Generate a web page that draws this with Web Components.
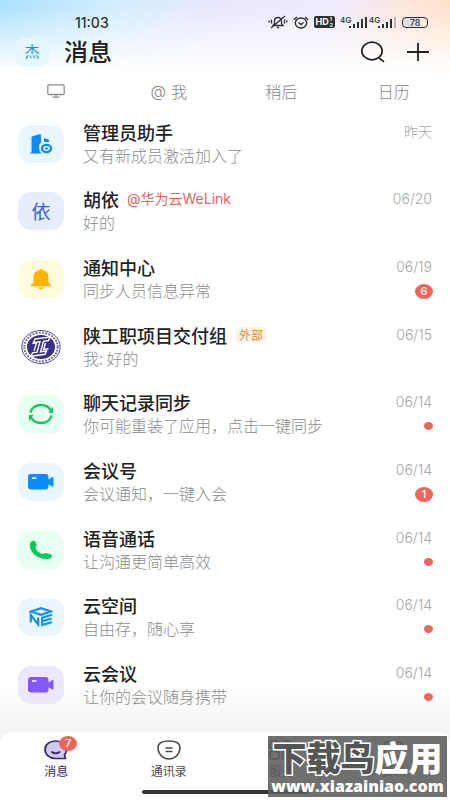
<!DOCTYPE html>
<html lang="zh-CN">
<head>
<meta charset="utf-8">
<meta name="viewport" content="width=device-width, initial-scale=1">
<title>消息</title>
<style>
    body {
        margin: 0;
        background: #fff;
        color: #222;
        font-family: "Noto Sans CJK SC", sans-serif;
    }
</style>
</head>
<body>
<message-app></message-app>

<script>
const ICONS = {
    admin: `<svg width="24" height="20" viewBox="0 0 24 20"><path fill="#0a8cff" d="M1 18.500h1.500V3.500q0-1 1-1.300L10.500.300q1.500-.300 1.500 1V8q-2 2-2 6 0 3 2.500 5.500H1zM15 4l4 1.200q1 .3 1 1.300v1.500h-5z"/><ellipse cx="17.500" cy="14.500" rx="4.500" ry="3.600" fill="none" stroke="#0a8cff" stroke-width="2.400"/><ellipse cx="17.500" cy="14.500" rx="1.500" ry="1.200" fill="#0a8cff"/></svg>`,
    bell: `<svg width="22" height="22" viewBox="0 0 22 22"><path fill="#ffb400" d="M9.500 2a1.600 1.500 0 0 1 3 0c4 .8 6 3.500 6 7v5.500l2.300 2.200c.6.700.2 1.500-.6 1.500H1.800c-.8 0-1.200-.8-.6-1.500l2.300-2.200V9c0-3.500 2-6.200 6-7zM8 19.300h6c-.3 1.300-1.500 2-3 2s-2.700-.7-3-2z"/></svg>`,
    sync: `<svg width="26" height="22" viewBox="0 0 26 22" fill="none" stroke="#14c45f" stroke-width="2.300"><path d="M2.500 9.500C3.500 4.800 7.800 2 13 2c4.500 0 8 2 9.800 5.500M23.500 12.500C22.500 17.200 18.200 20 13 20c-4.500 0-8-2-9.800-5.500"/><path fill="#14c45f" stroke="none" d="M25 3.500v6.500h-4.500zM1 18.500V12h4.500z"/></svg>`,
    video: `<svg width="26" height="18" viewBox="0 0 26 18"><rect y="1" width="20.500" height="15.500" rx="3" fill="currentColor"/><path fill="currentColor" d="M19 7.500 24.500 4q1-.4 1 .6V13q0 1-1 .6L19 10.500z"/><path stroke="#fff" stroke-width="1.500" d="M4 5h4.500"/></svg>`,
    phone: `<svg width="24" height="20" viewBox="0 0 24 20"><path fill="#0bc95b" d="M1 3.500C1.800 1.500 4 .3 5.200.8c1.300.6 2.300 3 2.500 4.500.1 1.200-1.500 1.800-1.200 2.800.8 2.300 3.500 4.800 6.500 5.800 1.200.3 2-.9 3.300-.9 2 .1 5.500 1.200 6.500 2.200.9 1-.6 3-3 3.600-4.500 1-10.500-.8-14.500-4.300C2 11.300.1 6.500 1 3.500z"/></svg>`,
    cube: `<svg width="24" height="20" viewBox="0 0 24 20" fill="none" stroke="#1592f0" stroke-width="2.200"><path d="M2 4.500 12 1.200l10 3.300L12 7.800zM1.800 15.500V8l7.400 9.500V10.500M23 7.800l-9.800 2.900v7.300l9.800-2.900M13.200 14.300l9.300-2.700"/></svg>`,
    college: `<svg width="42" height="36" viewBox="0 0 42 36"><g transform="translate(21 18) scale(1 .86)"><circle r="19.200" fill="#fff" stroke="#443b87" stroke-width="1"/><circle r="16.700" fill="none" stroke="#6d669f" stroke-width="2" stroke-dasharray="2 1.300"/><circle r="14" fill="#392f86"/></g><g fill="none" stroke="#fff" stroke-width="1.400"><path d="m15 10 15-2-1.500 3.500-5 .8-3 10.500 6-1-1.500 3.500-14 2 1.500-3.500 4.500-.7 3-10.500-6.500 1z"/><path d="m12.500 14.500 4-.6-2.500 8M25.500 14l-2 6.500 5-.8"/></g></svg>`,
    screen: `<svg width="18" height="14" viewBox="0 0 18 14" fill="none" stroke="#8b8b8b" stroke-width="1.300"><rect x=".8" y=".8" width="16.400" height="9.700" rx="1.200"/><path d="M9 10.500V13M5.500 13.200h7"/></svg>`,
    search: `<svg width="26" height="22" viewBox="0 0 26 22" fill="none" stroke="#222" stroke-width="1.700"><ellipse cx="12" cy="10" rx="10.200" ry="8.800"/><path d="m18.500 16.500 5.500 4.300"/></svg>`,
    plus: `<svg width="24" height="20" viewBox="0 0 24 20" stroke="#222" stroke-width="1.800"><path d="M1 10h22M12 1v18"/></svg>`,
    chat: `<svg width="26" height="22" viewBox="0 0 26 22" stroke="#33266e" stroke-width="1.700" stroke-linecap="round" stroke-linejoin="round"><path fill="#cfcbe6" d="M12.500 2C6.500 2 2 5.500 2 10.500s4.500 9 10.500 9h10l-1-3.500c1.300-1.500 2-3.300 2-5.500 0-5-5-8.500-11-8.500z"/><path fill="none" d="M9 13c2 1.800 5.500 1.800 7.500 0"/></svg>`,
    contacts: `<svg width="26" height="22" viewBox="0 0 26 22" fill="none" stroke="#4a4a4a" stroke-width="1.600"><path d="M13 2C7 2 2 3.800 2 8.500c0 3.500 2 7.500 5 9.700 3.300 2.400 8.700 2.400 12 0 3-2.200 5-6.200 5-9.700C24 3.800 19 2 13 2z"/><path d="M9.500 9h7M9.500 12.500h7"/></svg>`,
    apps: `<svg width="24" height="20" viewBox="0 0 24 20" fill="none" stroke="#4a4a4a" stroke-width="1.600"><rect x="1" y="1" width="9" height="7.500" rx="2"/><ellipse cx="18" cy="4.800" rx="4.700" ry="3.900"/><rect x="1" y="11.500" width="9" height="7.500" rx="2"/><rect x="13.500" y="11.500" width="9" height="7.500" rx="2"/></svg>`,
    news: `<svg width="20" height="18" viewBox="0 0 20 18" fill="none" stroke="#4a4a4a" stroke-width="1.600"><rect x="1" y="1" width="17" height="15.500" rx="2.500"/><path d="M13 1v8M7 9h11"/></svg>`
};

class StatusBar extends HTMLElement {
    constructor() {
        super();
        this.attachShadow({mode: 'open'});
    }

    connectedCallback() {
        this.shadowRoot.innerHTML = `
            <style>
        :host {
            display: flex;
            align-items: center;
            justify-content: space-between;
            height: 20px;
            padding: 12px 22px 0 75px;
            color: #2b2f36;
            font-family: Inter, "Liberation Sans", sans-serif;
        }

        time {
            font-size: 14px;
            font-weight: 500;
        }

        .right {
            display: flex;
            align-items: center;
            gap: 5px;
        }

        svg {
            display: block;
        }

        .hd {
            display: flex;
            gap: 1px;
            padding: 0 2px;
            border-radius: 2px;
            background: #2b2f36;
            color: #fff;
            font-size: 9px;
            font-weight: 700;
            line-height: 12px;
        }

        .sim {
            font-size: 5px;
            line-height: 6px;
        }

        .signals {
            display: flex;
            gap: 1px;
        }

        .signal {
            display: grid;
            grid-template-columns: 8px 20px;
            align-items: start;
            font-size: 8px;
            font-weight: 500;
            line-height: 8px;
        }

        .battery {
            box-sizing: border-box;
            width: 26px;
            height: 11px;
            border: 1px solid #2b2f36;
            border-radius: 4px;
            background: linear-gradient(to right, #e2dde2 70%, transparent 70%);
            font-size: 9px;
            font-weight: 500;
            line-height: 9px;
            text-align: center;
        }
            </style>
            <time>11:03</time>
            <div class="right">
                <svg width="20" height="14" viewBox="0 0 20 14" fill="none" stroke="#2b2f36" stroke-width="1.300"><path d="M5 10.500h10l-1.500-2V6c0-2-1.500-3.500-3.500-3.500S6.500 4 6.500 6v2.500zM9 12.500h2M3 13 17 1M3.500 4.500v4M1.200 5.500v2M16.500 4.500v4M18.800 5.500v2"/></svg>
                <svg width="16" height="13" viewBox="0 0 16 13" fill="none" stroke="#2b2f36" stroke-width="1.400"><ellipse cx="8" cy="7" rx="5.700" ry="5"/><path d="m5.500 6.500 2.500 2 2.500-2M.8 3.800 4 1M15.200 3.800 12 1"/></svg>
                <div class="hd">HD<div class="sim"><div>1</div><div>2</div></div></div>
                <div class="signals">
                    <div class="signal"><span>4G</span><svg width="20" height="13" viewBox="0 0 20 13" fill="#2b2f36"><path d="M1 10h2v2H1zM5 8h2v4H5zM9 6h2v6H9zM13 3h2v9h-2zM17 1h2v11h-2z"/></svg></div>
                    <div class="signal"><span>4G</span><svg width="20" height="13" viewBox="0 0 20 13" fill="#2b2f36"><path d="M1 10h2v2H1zM5 8h2v4H5zM9 6h2v6H9zM13 3h2v9h-2z"/><path fill="#b9b6b9" d="M17 1h2v11h-2z"/></svg></div>
                </div>
                <div class="battery">78</div>
            </div>
        `;
    }
}

class AppHeader extends HTMLElement {
    constructor() {
        super();
        this.attachShadow({mode: 'open'});
    }

    connectedCallback() {
        this.shadowRoot.innerHTML = `
            <style>
        :host {
            display: flex;
            align-items: center;
            gap: 14px;
            height: 40px;
            padding: 0 20px 0 14px;
        }

        .me {
            width: 36px;
            height: 30px;
            border-radius: 12px;
            background: #e4f6ff;
            color: #1e8fe8;
            font-size: 15px;
            line-height: 28px;
            text-align: center;
        }

        h1 {
            flex: 1;
            margin: 0;
            font-size: 24px;
            font-weight: 500;
            line-height: 36px;
            padding-bottom: 2px;
        }

        button {
            padding: 0;
            border: 0;
            background: none;
        }

        .add {
            margin-left: 6px;
        }

        svg {
            display: block;
        }
            </style>
            <div class="me">杰</div>
            <h1>消息</h1>
            <button type="button" aria-label="搜索">${ICONS.search}</button>
            <button type="button" class="add" aria-label="添加">${ICONS.plus}</button>
        `;
    }
}

class FilterTabs extends HTMLElement {
    constructor() {
        super();
        this.attachShadow({mode: 'open'});
    }

    connectedCallback() {
        this.shadowRoot.innerHTML = `
            <style>
        :host {
            display: grid;
            grid-template-columns: repeat(4, 1fr);
            height: 38px;
        }

        button {
            display: flex;
            align-items: center;
            justify-content: center;
            gap: 5px;
            padding: 0;
            border: 0;
            background: none;
            color: #868686;
            font: 300 16px Inter, "Noto Sans CJK SC", sans-serif;
        }
            </style>
            <button type="button" aria-label="设备">${ICONS.screen}</button>
            <button type="button"><span>@</span><span>我</span></button>
            <button type="button">稍后</button>
            <button type="button">日历</button>
        `;
    }
}

class CountBadge extends HTMLElement {
    constructor() {
        super();
        this.attachShadow({mode: 'open'});
    }

    connectedCallback() {
        this.shadowRoot.innerHTML = `
            <style>
        :host {
            display: block;
            width: 18px;
            height: 15px;
            border-radius: 50%;
            background: #f0655b;
            color: #fff;
            font: 500 11px/15px Inter, sans-serif;
            text-align: center;
        }

        :host([dot]) {
            width: 9px;
            height: 8px;
        }
            </style>
            <slot></slot>
        `;
    }
}

class ChatRow extends HTMLElement {
    constructor() {
        super();
        this.attachShadow({mode: 'open'});
    }

    connectedCallback() {
        const icon = this.getAttribute('icon');
        this.shadowRoot.innerHTML = `
            <style>
        :host {
            display: grid;
            grid-template-columns: 46px 1fr auto;
            align-items: center;
            column-gap: 19px;
            padding: 0 17px 0 18px;
        }

        .avatar {
            display: flex;
            align-items: center;
            justify-content: center;
            height: 38px;
            border-radius: 13px;
            background: var(--tile);
            color: var(--ink);
            font-size: 19px;
            line-height: 36px;
        }

        .body,
        .side {
            height: 48px;
        }

        .top {
            display: flex;
            align-items: center;
            gap: 8px;
            height: 24px;
        }

        h2 {
            margin: 0;
            font-size: 18px;
            font-weight: 500;
            line-height: 24px;
        }

        p {
            margin: 0;
            color: #8c8c8c;
            font-size: 16px;
            font-weight: 300;
            line-height: 22px;
        }

        .side {
            display: flex;
            flex-direction: column;
            align-items: flex-end;
        }

        time {
            padding-right: 1px;
            color: #a6a6a6;
            font: 300 14px/24px Inter, "Noto Sans CJK SC", sans-serif;
        }

        .mark {
            display: flex;
            flex: 1;
            align-items: center;
        }
            </style>
            <div class="avatar">${ICONS[icon] || icon}</div>
            <div class="body">
                <div class="top"><h2>${this.getAttribute('name')}</h2><slot name="tag"></slot></div>
                <p>${this.getAttribute('text')}</p>
            </div>
            <div class="side">
                <time>${this.getAttribute('date')}</time>
                <div class="mark"><slot name="badge"></slot></div>
            </div>
        `;
    }
}

class TabBar extends HTMLElement {
    constructor() {
        super();
        this.attachShadow({mode: 'open'});
    }

    connectedCallback() {
        this.shadowRoot.innerHTML = `
            <style>
        :host {
            display: block;
            background: #f4f4f4;
        }

        nav {
            display: grid;
            grid-template-columns: repeat(4, 1fr);
            height: 58px;
            border-radius: 12px 12px 0 0;
            background: #fff;
        }

        a {
            display: flex;
            flex-direction: column;
            align-items: center;
            padding-top: 6px;
            color: #4a4a4a;
            font-size: 12px;
            line-height: 18px;
            text-decoration: none;
        }

        a.active {
            color: #33266e;
        }

        .icon {
            display: flex;
            align-items: center;
            position: relative;
            height: 24px;
        }

        count-badge {
            position: absolute;
            top: -2px;
            left: 16px;
        }

        .home {
            height: 10px;
            background: #fff;
        }

        .home::before {
            content: "";
            display: block;
            width: 37%;
            height: 4px;
            margin: auto;
            border-radius: 2px;
            background: #303533;
        }
            </style>
            <nav>
                <a href="#messages" class="active"><span class="icon">${ICONS.chat}<count-badge>7</count-badge></span>消息</a>
                <a href="#contacts"><span class="icon">${ICONS.contacts}</span>通讯录</a>
                <a href="#services"><span class="icon">${ICONS.apps}</span>服务</a>
                <a href="#news"><span class="icon">${ICONS.news}</span>资讯</a>
            </nav>
            <div class="home"></div>
        `;
    }
}

// download site stamp in the bottom right corner
class SiteStamp extends HTMLElement {
    constructor() {
        super();
        this.attachShadow({mode: 'open'});
    }

    connectedCallback() {
        this.shadowRoot.innerHTML = `
            <style>
        :host {
            display: block;
            width: 179px;
            height: 61px;
            background: rgba(92, 92, 92, 0.88);
            color: #fff;
            text-align: center;
            white-space: nowrap;
        }

        .name {
            font-size: 34px;
            font-weight: 900;
            line-height: 42px;
        }

        .name span {
            color: #555;
            -webkit-text-stroke: 3px #fff;
            paint-order: stroke fill;
        }

        .site {
            font: 800 16px/16px "Open Sans", sans-serif;
        }
            </style>
            <div class="name"><span>下载鸟</span>应用</div>
            <div class="site">www.xiazainiao.com</div>
        `;
    }
}

class MessageApp extends HTMLElement {
    constructor() {
        super();
        this.attachShadow({mode: 'open'});
    }

    connectedCallback() {
        this.shadowRoot.innerHTML = `
            <style>
        :host {
            display: flex;
            flex-direction: column;
            position: relative;
            min-height: 100vh;
        }

        .sky {
            background:
                linear-gradient(to bottom, rgba(255, 255, 255, 0) 10%, #fff 100%),
                linear-gradient(105deg, #abe1fd 0%, #d3edfe 24%, #ebe8fe 48%, #f0ebfd 72%, #ffe6d6 90%, #ffe0c8 100%);
        }

        main {
            display: grid;
            flex: 1;
            grid-auto-rows: 1fr;
            padding-bottom: 13px;
            background: linear-gradient(to top, #f3f3f3, #fff 48px);
        }

        .mention {
            color: #e0675f;
            font: 400 14px/20px Inter, "Noto Sans CJK SC", sans-serif;
        }

        .outside {
            padding: 0 4px;
            border-radius: 3px;
            background: #fff3e6;
            color: #d98a3d;
            font-size: 12px;
            line-height: 15px;
        }

        .blue { --tile: #eaf6ff; --ink: #0a8cff; }
        .indigo { --tile: #e6eefe; --ink: #3f62d8; }
        .yellow { --tile: #fffbdc; }
        .green { --tile: #e6fff0; }
        .violet { --tile: #ece6ff; --ink: #8257ff; }

        site-stamp {
            position: absolute;
            right: 3px;
            bottom: 3px;
        }
            </style>
            <div class="sky">
                <status-bar></status-bar>
                <app-header></app-header>
            </div>
            <filter-tabs></filter-tabs>
            <main>
                <chat-row class="blue" icon="admin" name="管理员助手" text="又有新成员激活加入了" date="昨天"></chat-row>
                <chat-row class="indigo" icon="依" name="胡依" text="好的" date="06/20"><span slot="tag" class="mention">@华为云WeLink</span></chat-row>
                <chat-row class="yellow" icon="bell" name="通知中心" text="同步人员信息异常" date="06/19"><count-badge slot="badge">6</count-badge></chat-row>
                <chat-row icon="college" name="陕工职项目交付组" text="我: 好的" date="06/15"><span slot="tag" class="outside">外部</span></chat-row>
                <chat-row class="green" icon="sync" name="聊天记录同步" text="你可能重装了应用，点击一键同步" date="06/14"><count-badge slot="badge" dot></count-badge></chat-row>
                <chat-row class="blue" icon="video" name="会议号" text="会议通知，一键入会" date="06/14"><count-badge slot="badge">1</count-badge></chat-row>
                <chat-row class="green" icon="phone" name="语音通话" text="让沟通更简单高效" date="06/14"><count-badge slot="badge" dot></count-badge></chat-row>
                <chat-row class="blue" icon="cube" name="云空间" text="自由存，随心享" date="06/14"><count-badge slot="badge" dot></count-badge></chat-row>
                <chat-row class="violet" icon="video" name="云会议" text="让你的会议随身携带" date="06/14"><count-badge slot="badge" dot></count-badge></chat-row>
            </main>
            <tab-bar></tab-bar>
            <site-stamp></site-stamp>
        `;
    }
}

customElements.define('status-bar', StatusBar);
customElements.define('app-header', AppHeader);
customElements.define('filter-tabs', FilterTabs);
customElements.define('count-badge', CountBadge);
customElements.define('chat-row', ChatRow);
customElements.define('tab-bar', TabBar);
customElements.define('site-stamp', SiteStamp);
customElements.define('message-app', MessageApp);
</script>
</body>
</html>
